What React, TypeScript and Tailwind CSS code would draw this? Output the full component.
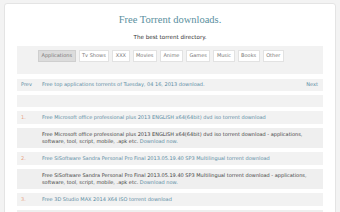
const tabs = ['Applications', 'Tv Shows', 'XXX', 'Movies', 'Anime', 'Games', 'Music', 'Books', 'Other'];

const items = [
    {
        n: '1.',
        title: 'Free Microsoft office professional plus 2013 ENGLISH x64(64bit) dvd iso torrent download',
        desc: 'Free Microsoft office professional plus 2013 ENGLISH x64(64bit) dvd iso torrent download - applications, software, tool, script, mobile, .apk etc.',
    },
    {
        n: '2.',
        title: 'Free SiSoftware Sandra Personal Pro Final 2013.05.19.40 SP3 Multilingual torrent download',
        desc: 'Free SiSoftware Sandra Personal Pro Final 2013.05.19.40 SP3 Multilingual torrent download - applications, software, tool, script, mobile, .apk etc.',
    },
    {
        n: '3.',
        title: 'Free 3D Studio MAX 2014 X64 ISO torrent download',
        desc: 'Free 3D Studio MAX 2014 X64 ISO torrent download - applications, software, tool, script, mobile, .apk etc.',
    },
];

export default function App() {
    return (
        <div className="w-[340px] h-[212px] overflow-hidden bg-[#f3f3f3] pt-[3px] px-[4px] font-['DejaVu_Sans',Verdana,sans-serif]">
            <div className="h-[240px] bg-white border border-[#e4e4e4] rounded-[3px] px-[12px]">
                {/* Header */}
                <div
                    className="pt-[9px] h-[29px] text-center text-[10.5px] leading-[14px] text-[#5a8f9e]"
                    style={{ fontFamily: '"Liberation Serif", "DejaVu Serif", serif' }}
                >
                    Free Torrent downloads.
                </div>
                <div className="h-[13px] text-center text-[5.6px] leading-[8px] text-[#333]">The best torrent directory.</div>

                {/* Category nav */}
                <div className="bg-[#f2f2f2] h-[28px] pt-[4px] pl-[21px] flex gap-[3px]">
                    {tabs.map((t, i) => (
                        <span
                            key={t}
                            className={`h-[12px] px-[2.5px] flex items-center text-[5px] text-[#777] border ${i === 0 ? 'bg-[#dcdcdc] border-[#cfcfcf]' : 'bg-white border-[#e2e2e2]'}`}
                        >
                            {t}
                        </span>
                    ))}
                </div>

                {/* Prev / Next */}
                <div className="mt-[5px] bg-[#f2f2f2] h-[12px] flex items-center px-[4px] text-[5px] text-[#5b8ca3]">
                    <span className="w-[21px]">Prev</span>
                    <span className="flex-1">Free top applications torrents of Tuesday, 04 16, 2013 download.</span>
                    <span className="pr-[1px]">Next</span>
                </div>
                <div className="mt-[4px] bg-[#f2f2f2] h-[12px]" />

                {/* Listing */}
                {items.map((it) => (
                    <div key={it.n}>
                        <div className="mt-[4px] bg-[#f2f2f2] h-[13px] flex items-center px-[4px] text-[5px]">
                            <span className="w-[21px] shrink-0 text-[#e8a585]">{it.n}</span>
                            <span className="text-[#5b8ca3] whitespace-nowrap">{it.title}</span>
                        </div>
                        <div className="mt-[4px] bg-[#efefef] h-[20px] flex items-center pl-[25px] pr-[8px] text-[5px] leading-[7.5px] text-[#444]">
                            <p>
                                {it.desc} <span className="text-[#5b8ca3]">Download now.</span>
                            </p>
                        </div>
                    </div>
                ))}
            </div>
        </div>
    );
}
